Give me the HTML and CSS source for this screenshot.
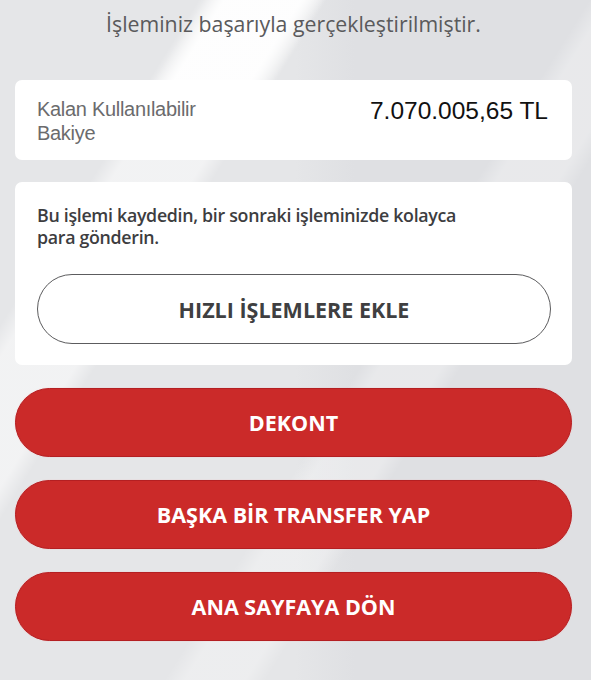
FILE: index.html
```html
<!DOCTYPE html>
<html lang="tr">
<head>
<meta charset="utf-8">
<link rel="stylesheet" href="styles.css">
</head>
<body>
<main class="page">
  <p class="title">İşleminiz başarıyla gerçekleştirilmiştir.</p>
  <section class="card balance">
    <div class="balance-label">Kalan Kullanılabilir<br>Bakiye</div>
    <div class="balance-amount">7.070.005,65 TL</div>
  </section>
  <section class="card save">
    <p class="save-text">Bu işlemi kaydedin, bir sonraki işleminizde kolayca para gönderin.</p>
    <button class="btn btn-outline">HIZLI İŞLEMLERE EKLE</button>
  </section>
  <button class="btn btn-red">DEKONT</button>
  <button class="btn btn-red">BAŞKA BİR TRANSFER YAP</button>
  <button class="btn btn-red">ANA SAYFAYA DÖN</button>
</main>
</body>
</html>
```

FILE: styles.css
```css
html, body {
  margin: 0;
  padding: 0;
}
body {
  width: 591px;
  height: 680px;
  overflow: hidden;
  background-color: #e2e3e5;
  background-image:
    linear-gradient(122deg, transparent 0 31%, rgba(255,255,255,0.9) 35% 47%, transparent 51%),
    linear-gradient(122deg, transparent 0 20%, rgba(255,255,255,0.5) 22% 30%, transparent 32%),
    linear-gradient(122deg, transparent 0 58%, rgba(255,255,255,0.3) 60% 66%, transparent 68%),
    linear-gradient(90deg, #e5e6e8 0 50%, #dfe0e3 60%);
  background-size: 591px 80px, auto, auto, auto;
  background-repeat: no-repeat;
  font-family: "Open Sans", "Liberation Sans", sans-serif;
}
.page {
  display: flex;
  flex-direction: column;
  padding: 0 19px 0 15px;
}
.title {
  margin: 9px 0 0;
  height: 35px;
  text-align: center;
  font-size: 21.3px;
  line-height: 30px;
  color: #5a5a5c;
}
.card {
  background: #fff;
  border-radius: 7px;
}
.balance {
  margin-top: 36px;
  height: 80px;
  box-sizing: border-box;
  display: flex;
  justify-content: space-between;
  padding: 17px 24px 0 22px;
}
.balance-label {
  font-family: "Liberation Sans", Arial, sans-serif;
  font-size: 20px;
  line-height: 24px;
  letter-spacing: -0.3px;
  color: #6b6b6d;
}
.balance-amount {
  font-family: "Liberation Sans", Arial, sans-serif;
  font-size: 24.5px;
  line-height: 24px;
  color: #111;
  padding-top: 2px;
}
.save {
  margin-top: 22px;
  height: 183px;
  box-sizing: border-box;
  padding: 22px 21px 0 22px;
  display: flex;
  flex-direction: column;
}
.save-text {
  margin: 0;
  max-width: 440px;
  font-size: 17.8px;
  line-height: 22px;
  font-weight: 600;
  color: #3d3d3f;
  letter-spacing: -0.3px;
}
.btn {
  display: block;
  width: 100%;
  box-sizing: border-box;
  border-radius: 36px;
  font-family: "Open Sans", "Liberation Sans", sans-serif;
  font-weight: 700;
  font-size: 21.5px;
  letter-spacing: 0;
  text-align: center;
  padding: 0;
  cursor: pointer;
}
.btn-outline {
  margin-top: 26px;
  height: 70px;
  background: #fff;
  border: 1.3px solid #5c5c5e;
  color: #3f3f41;
}
.btn-red {
  height: 69px;
  margin-top: 23px;
  background: #cb2a29;
  border: 1px solid #b41f22;
  color: #fff;
  box-shadow: 0 0 1px rgba(255,120,120,0.6);
}
```
